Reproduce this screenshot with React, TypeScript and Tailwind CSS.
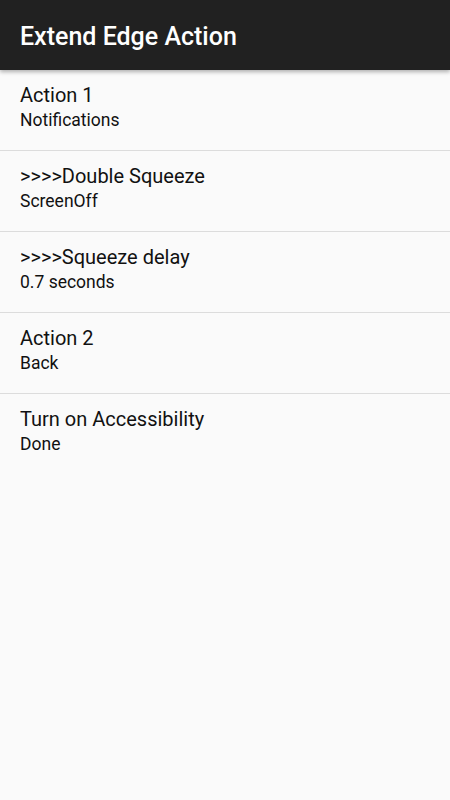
const items = [
  { title: 'Action 1', value: 'Notifications' },
  { title: '>>>>Double Squeeze', value: 'ScreenOff' },
  { title: '>>>>Squeeze delay', value: '0.7 seconds' },
  { title: 'Action 2', value: 'Back' },
  { title: 'Turn on Accessibility', value: 'Done' },
];

export default function App() {
  return (
    <div className="min-h-[800px] bg-[#fafafa] font-['Roboto',sans-serif]">
      {/* Toolbar */}
      <header className="relative z-10 h-[70px] bg-[#212121] flex items-center px-5 pt-[3px] shadow-[0_2px_4px_rgba(0,0,0,0.3)]">
        <h1 className="text-[25px] font-medium text-white leading-[28px]">Extend Edge Action</h1>
      </header>

      <ul>
        {items.map((item, i) => (
          <li
            key={item.title}
            className={
              i < items.length - 1
                ? 'h-[81px] px-5 pt-[13px] border-b border-[#dcdcdc]'
                : 'h-[81px] px-5 pt-[13px]'
            }
          >
            <div className="text-[20px] leading-[24px] text-[#111]">{item.title}</div>
            <div className="mt-px text-[17.5px] leading-[24px] text-[#111]">{item.value}</div>
          </li>
        ))}
      </ul>
    </div>
  );
}
